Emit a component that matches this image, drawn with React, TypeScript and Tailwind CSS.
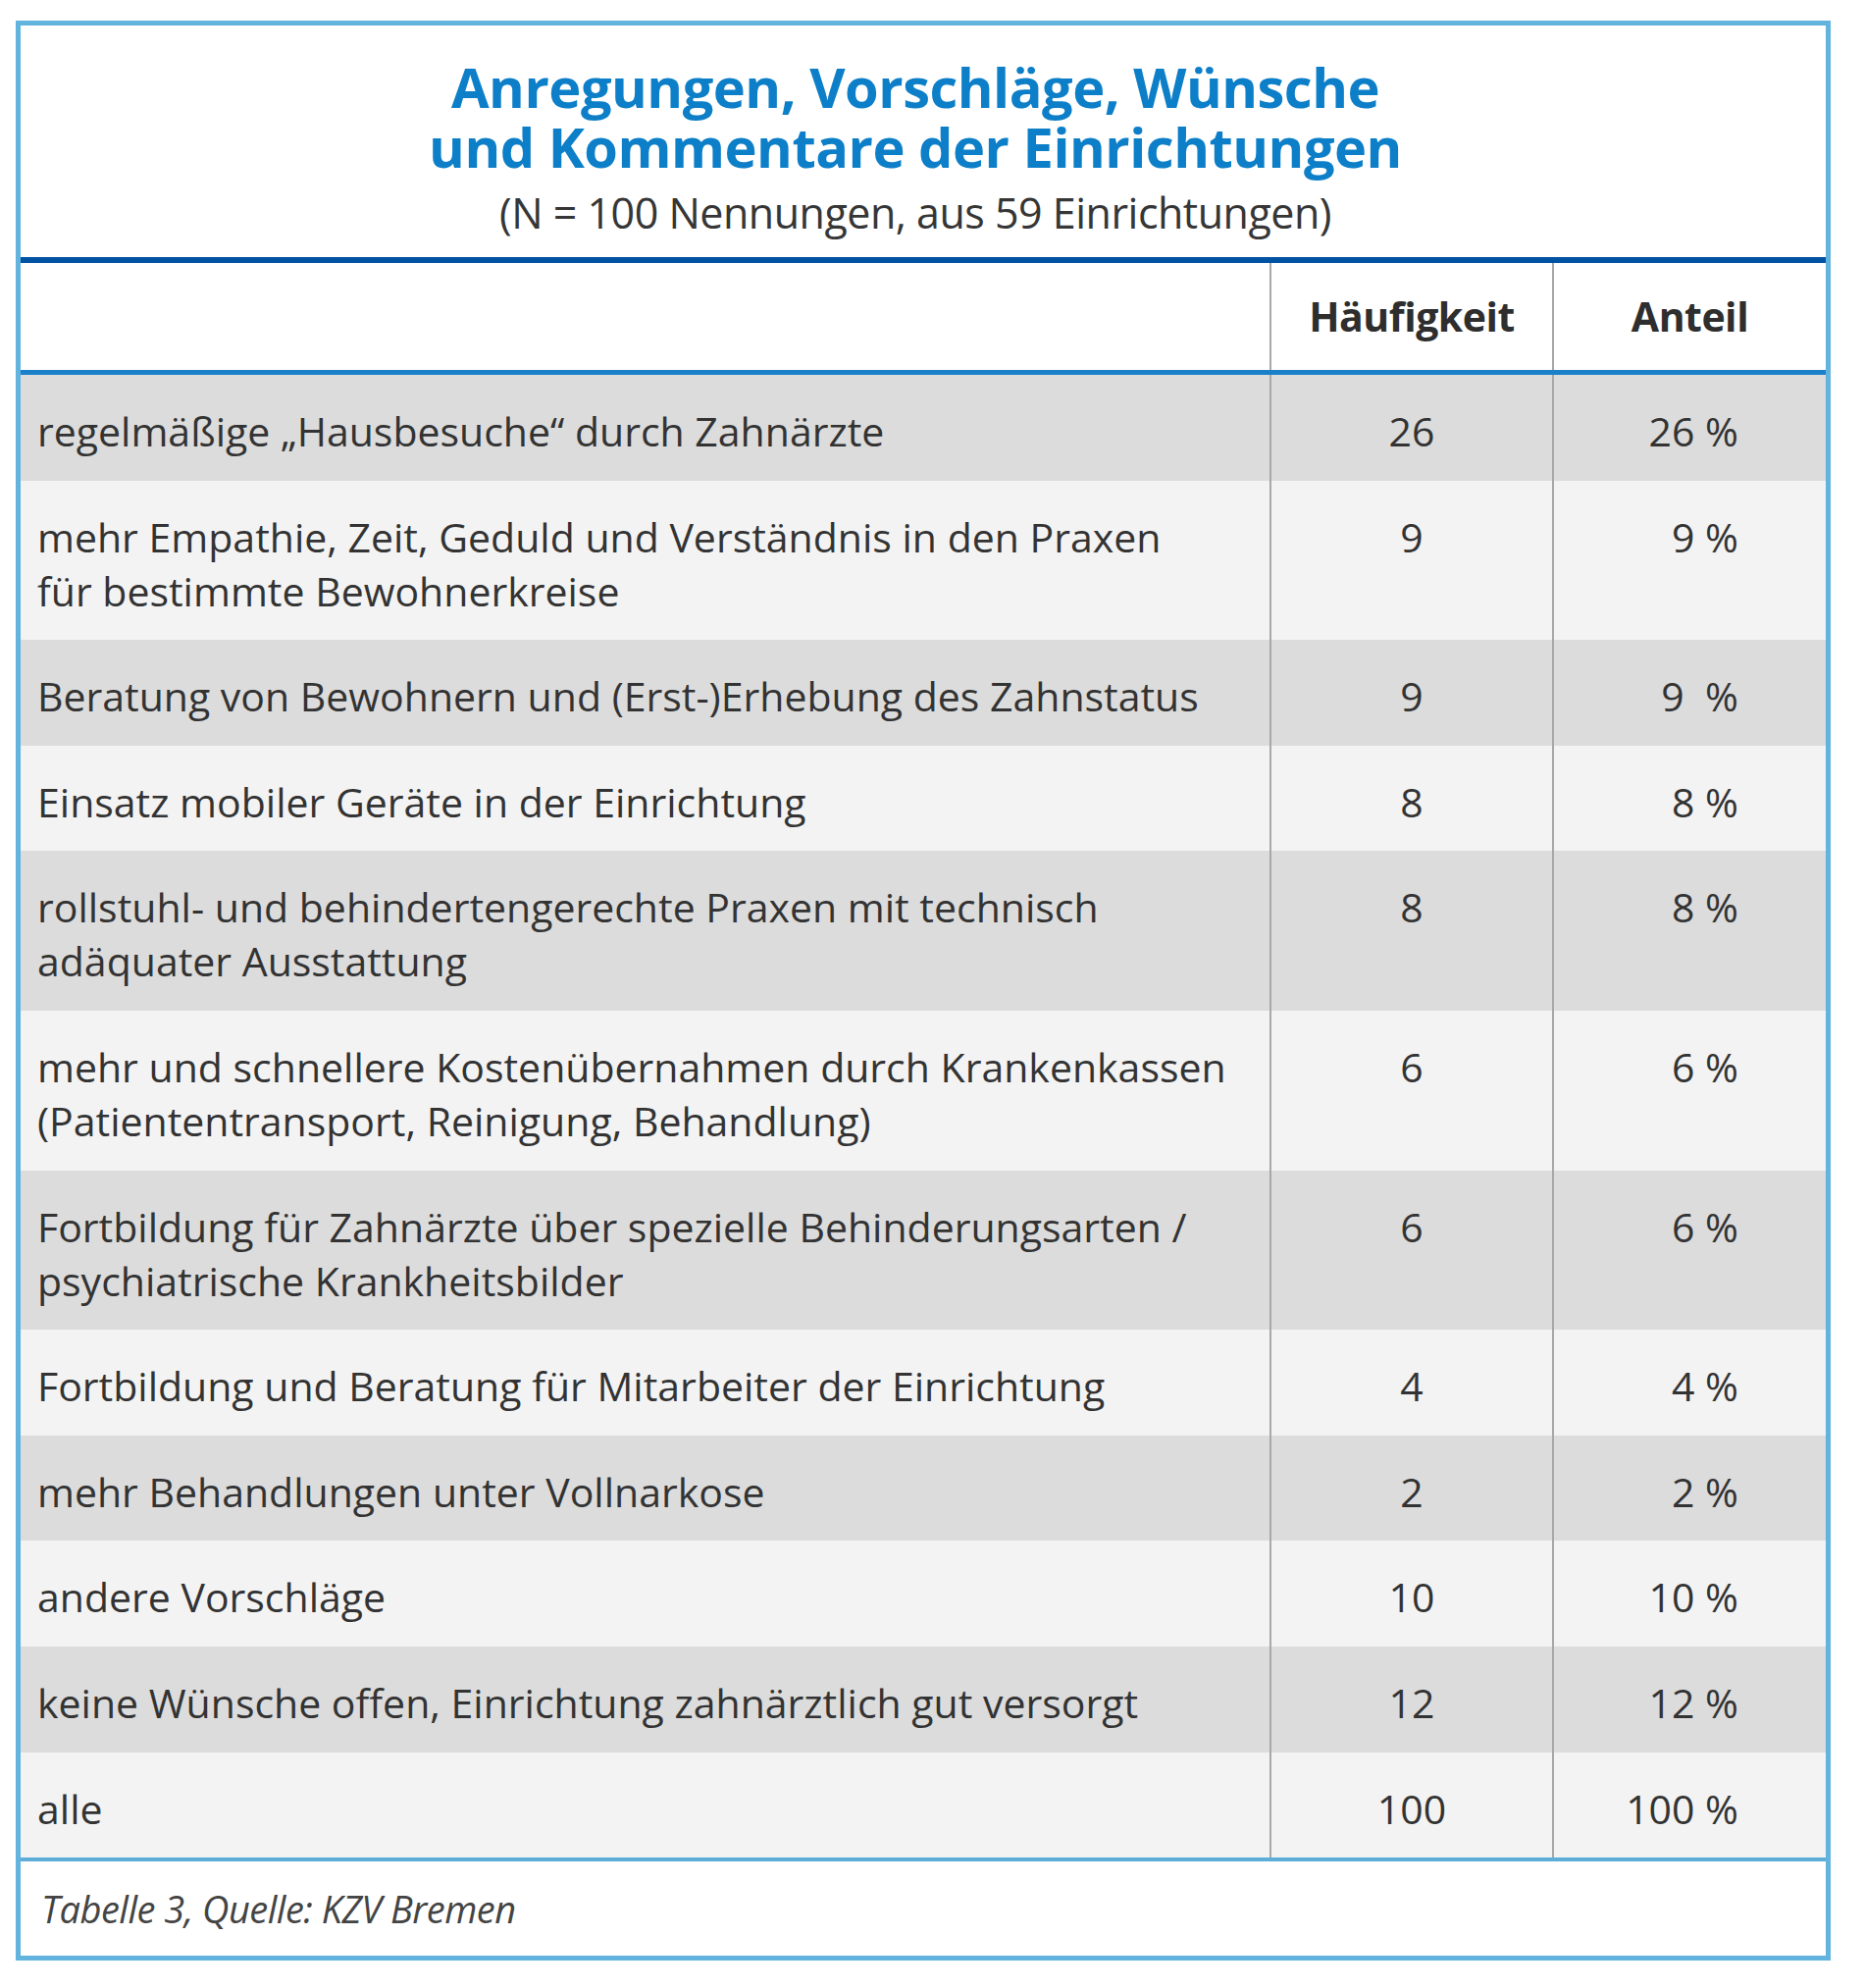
import React from "react";

type Row = { label: string[]; n: string; p: string };

const rows: Row[] = [
  { label: ["regelmäßige „Hausbesuche“ durch Zahnärzte"], n: "26", p: "26 %" },
  { label: ["mehr Empathie, Zeit, Geduld und Verständnis in den Praxen", "für bestimmte Bewohnerkreise"], n: "9", p: "9 %" },
  { label: ["Beratung von Bewohnern und (Erst-)Erhebung des Zahnstatus"], n: "9", p: "9  %" },
  { label: ["Einsatz mobiler Geräte in der Einrichtung"], n: "8", p: "8 %" },
  { label: ["rollstuhl- und behindertengerechte Praxen mit technisch", "adäquater Ausstattung"], n: "8", p: "8 %" },
  { label: ["mehr und schnellere Kostenübernahmen durch Krankenkassen", "(Patiententransport, Reinigung, Behandlung)"], n: "6", p: "6 %" },
  { label: ["Fortbildung für Zahnärzte über spezielle Behinderungsarten /", "psychiatrische Krankheitsbilder"], n: "6", p: "6 %" },
  { label: ["Fortbildung und Beratung für Mitarbeiter der Einrichtung"], n: "4", p: "4 %" },
  { label: ["mehr Behandlungen unter Vollnarkose"], n: "2", p: "2 %" },
  { label: ["andere Vorschläge"], n: "10", p: "10 %" },
  { label: ["keine Wünsche offen, Einrichtung zahnärztlich gut versorgt"], n: "12", p: "12 %" },
  { label: ["alle"], n: "100", p: "100 %" },
];

export default function App() {
  return (
    <div className="bg-white min-h-[2026px] w-[1900px] pt-[21px] pl-[16px]" style={{ fontFamily: '"Open Sans", "Noto Sans", sans-serif' }}>
      <div className="w-[1850px] border-[5px] border-[#62b3dd] bg-white flex flex-col">
        {/* Title block */}
        <div className="h-[236px] flex flex-col items-center pt-[32px] pr-[16px]">
          <div className="text-[#0d7fc8] font-bold text-[56px] leading-[61px] text-center tracking-[-0.5px]">
            <div>Anregungen, Vorschläge, Wünsche</div>
            <div>und Kommentare der Einrichtungen</div>
          </div>
          <div className="text-[#363636] text-[43px] leading-[50px] mt-[12px] tracking-[-0.5px]">
            (N = 100 Nennungen, aus 59 Einrichtungen)
          </div>
        </div>
        <div className="h-[6px] bg-[#0052a3]" />
        {/* Header row */}
        <div className="flex h-[109px] bg-white">
          <div className="w-[1273px]" />
          <div className="w-[288px] border-l-2 border-[#a8a8a8] flex items-center justify-center text-[41px] font-bold text-[#2e2e2e] tracking-[-0.5px]">
            Häufigkeit
          </div>
          <div className="flex-1 border-l-2 border-[#a8a8a8] flex items-center justify-center text-[41px] font-bold text-[#2e2e2e] tracking-[-0.5px]">
            Anteil
          </div>
        </div>
        <div className="h-[5px] bg-[#1a80c8]" />
        {/* Body rows */}
        <div className="flex flex-col">
          {rows.map((r, i) => (
            <div
              key={i}
              className={
                "flex text-[41px] leading-[55px] text-[#333333] " +
                (i % 2 === 0 ? "bg-[#dcdcdc]" : "bg-[#f3f3f3]")
              }
            >
              <div className="w-[1273px] pl-[17px] pt-[30px] pb-[22.6px]">
                {r.label.map((l, j) => (
                  <div key={j} className="whitespace-pre">{l}</div>
                ))}
              </div>
              <div className="w-[288px] border-l-2 border-[#a8a8a8] pt-[30px] text-center">{r.n}</div>
              <div className="flex-1 border-l-2 border-[#a8a8a8] pt-[30px] text-right pr-[89px] whitespace-pre">{r.p}</div>
            </div>
          ))}
        </div>
        <div className="h-[4px] bg-[#5dadd9]" />
        {/* Footer */}
        <div className="h-[96px] flex items-center pl-[21px] text-[38px] italic text-[#444] tracking-[-0.5px]">
          Tabelle 3, Quelle: KZV Bremen
        </div>
      </div>
    </div>
  );
}
